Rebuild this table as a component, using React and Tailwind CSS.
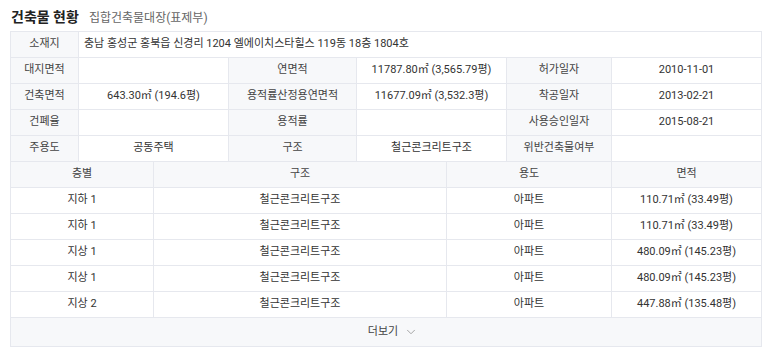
import { ChevronDown } from "lucide-react";

const FONT = "font-['Roboto','Noto_Sans_CJK_KR',sans-serif]";

const info = [
    [["대지면적", ""], ["연면적", "11787.80㎡ (3,565.79평)"], ["허가일자", "2010-11-01"]],
    [["건축면적", "643.30㎡ (194.6평)"], ["용적률산정용연면적", "11677.09㎡ (3,532.3평)"], ["착공일자", "2013-02-21"]],
    [["건폐율", ""], ["용적률", ""], ["사용승인일자", "2015-08-21"]],
    [["주용도", "공동주택"], ["구조", "철근콘크리트구조"], ["위반건축물여부", ""]],
];

const floors = [
    ["지하 1", "철근콘크리트구조", "아파트", "110.71㎡ (33.49평)"],
    ["지하 1", "철근콘크리트구조", "아파트", "110.71㎡ (33.49평)"],
    ["지상 1", "철근콘크리트구조", "아파트", "480.09㎡ (145.23평)"],
    ["지상 1", "철근콘크리트구조", "아파트", "480.09㎡ (145.23평)"],
    ["지상 2", "철근콘크리트구조", "아파트", "447.88㎡ (135.48평)"],
];

const cell = "border border-[#e6e8ee] text-center align-middle";
const label = `${cell} bg-[#f7f8fa] text-[#444]`;

export default function App() {
    return (
        <div className={`${FONT} w-[773px] h-[353px] bg-white text-[11px] text-[#333] pl-[10px] pt-[7px]`}>
            <div className="flex items-baseline gap-[10px] pl-px h-[24px]">
                <h2 className="text-[14px] font-bold text-[#222]">건축물 현황</h2>
                <span className="text-[12px] text-[#666]">집합건축물대장(표제부)</span>
            </div>

            <table className="table-fixed border-collapse w-[751px]">
                <colgroup>
                    <col className="w-[68px]" />
                    <col className="w-[150px]" />
                    <col className="w-[128px]" />
                    <col className="w-[150px]" />
                    <col className="w-[105px]" />
                    <col className="w-[150px]" />
                </colgroup>
                <tbody>
                    <tr className="h-[26px]">
                        <td className={label}>소재지</td>
                        <td colSpan={5} className={`${cell} text-left pl-[5px]`}>
                            충남 홍성군 홍북읍 신경리 1204 엘에이치스타힐스 119동 18층 1804호
                        </td>
                    </tr>
                    {info.map((row, i) => (
                        <tr key={i} className="h-[26px]">
                            {row.map(([k, v]) => [
                                <td key={k} className={label}>{k}</td>,
                                <td key={k + "v"} className={cell}>{v}</td>,
                            ])}
                        </tr>
                    ))}
                </tbody>
            </table>

            <table className="table-fixed border-collapse w-[751px] -mt-px">
                <colgroup>
                    <col className="w-[143px]" />
                    <col className="w-[293px]" />
                    <col className="w-[165px]" />
                    <col className="w-[150px]" />
                </colgroup>
                <thead>
                    <tr className="h-[26px]">
                        {["층별", "구조", "용도", "면적"].map(h => (
                            <th key={h} className={`${label} font-normal`}>{h}</th>
                        ))}
                    </tr>
                </thead>
                <tbody>
                    {floors.map((row, i) => (
                        <tr key={i} className="h-[26px]">
                            {row.map((v, j) => (
                                <td key={j} className={cell}>{v}</td>
                            ))}
                        </tr>
                    ))}
                    <tr className="h-[29px]">
                        <td colSpan={4} className={`${cell} bg-[#f7f8fa]`}>
                            <span className="inline-flex items-center gap-[6px] pl-[14px] text-[#444]">
                                더보기
                                <ChevronDown size={14} strokeWidth={1.5} className="text-[#999]" />
                            </span>
                        </td>
                    </tr>
                </tbody>
            </table>
        </div>
    );
}
